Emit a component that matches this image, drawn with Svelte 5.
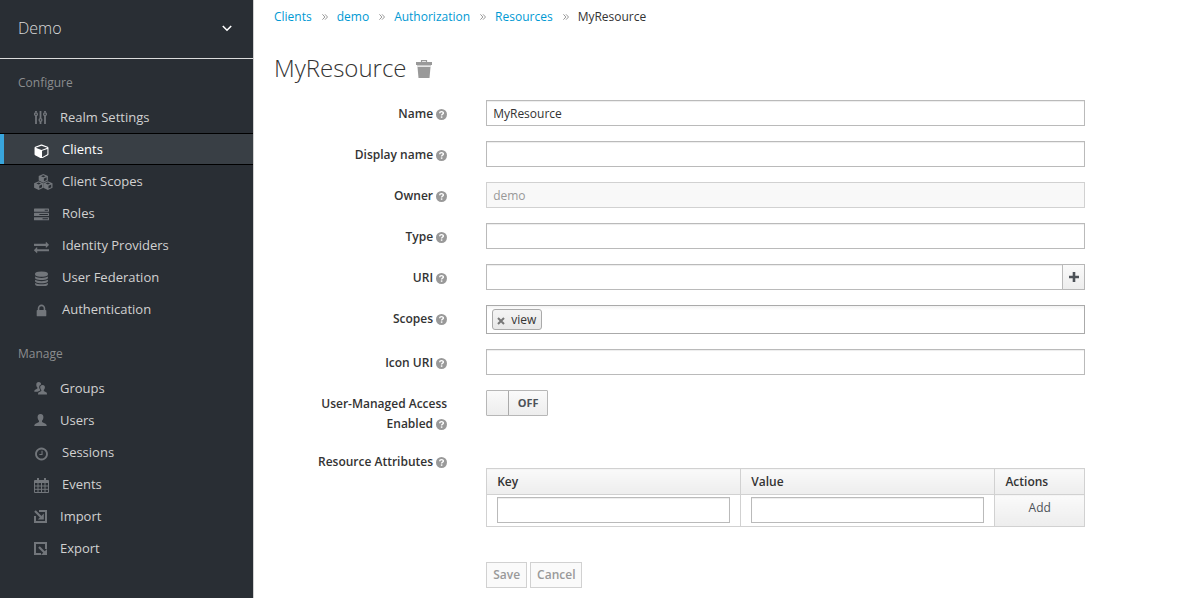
<script>
  const configure = [
    { name: 'Realm Settings', icon: 'sliders' },
    { name: 'Clients', icon: 'cube', active: true },
    { name: 'Client Scopes', icon: 'cubes' },
    { name: 'Roles', icon: 'tasks' },
    { name: 'Identity Providers', icon: 'exchange' },
    { name: 'User Federation', icon: 'database' },
    { name: 'Authentication', icon: 'lock' },
  ];
  const manage = [
    { name: 'Groups', icon: 'users' },
    { name: 'Users', icon: 'user' },
    { name: 'Sessions', icon: 'clock' },
    { name: 'Events', icon: 'calendar' },
    { name: 'Import', icon: 'import' },
    { name: 'Export', icon: 'export' },
  ];
  const menus = [
    { title: 'Configure', items: configure },
    { title: 'Manage', items: manage },
  ];
  const crumbs = ['Clients', 'demo', 'Authorization', 'Resources'];

  const glyphs = {
    cube: 'M896 1629l640-349v-636l-640 233v752zm-64-865l698-254-698-254-698 254zm832-252v768q0 35-18 65t-49 47l-704 384q-28 16-61 16t-61-16l-704-384q-31-17-49-47t-18-65v-768q0-40 23-73t61-50l704-256q22-8 44-8t44 8l704 256q38 17 61 50t23 73z',
    tasks: 'M1024 1408h640v-128h-640v128zm-384-512h1024v-128h-1024v128zm640-512h384v-128h-384v128zm512 832v256q0 26-19 45t-45 19h-1664q-26 0-45-19t-19-45v-256q0-26 19-45t45-19h1664q26 0 45 19t19 45zm0-512v256q0 26-19 45t-45 19h-1664q-26 0-45-19t-19-45v-256q0-26 19-45t45-19h1664q26 0 45 19t19 45zm0-512v256q0 26-19 45t-45 19h-1664q-26 0-45-19t-19-45v-256q0-26 19-45t45-19h1664q26 0 45 19t19 45z',
    exchange: 'M1792 1184v192q0 13-9.5 22.5t-22.5 9.5h-1376v192q0 13-9.5 22.5t-22.5 9.5q-12 0-24-10l-319-320q-9-9-9-22 0-14 9-23l320-320q9-9 23-9 13 0 22.5 9.5t9.5 22.5v192h1376q13 0 22.5 9.5t9.5 22.5zm0-544q0 14-9 23l-320 320q-9 9-23 9-13 0-22.5-9.5t-9.5-22.5v-192h-1376q-13 0-22.5-9.5t-9.5-22.5v-192q0-13 9.5-22.5t22.5-9.5h1376v-192q0-14 9-23t23-9q12 0 24 10l319 319q9 9 9 23z',
    database: 'M896 768q237 0 443-43t325-127v170q0 69-103 128t-280 93.5-385 34.5-385-34.5-280-93.5-103-128v-170q119 84 325 127t443 43zm0 768q237 0 443-43t325-127v170q0 69-103 128t-280 93.5-385 34.5-385-34.5-280-93.5-103-128v-170q119 84 325 127t443 43zm0-384q237 0 443-43t325-127v170q0 69-103 128t-280 93.5-385 34.5-385-34.5-280-93.5-103-128v-170q119 84 325 127t443 43zm0-1152q208 0 385 34.5t280 93.5 103 128v128q0 69-103 128t-280 93.5-385 34.5-385-34.5-280-93.5-103-128v-128q0-69 103-128t280-93.5 385-34.5z',
    lock: 'M640 768h512v-192q0-106-75-181t-181-75-181 75-75 181v192zm832 96v576q0 40-28 68t-68 28h-960q-40 0-68-28t-28-68v-576q0-40 28-68t68-28h32v-192q0-184 132-316t316-132 316 132 132 316v192h32q40 0 68 28t28 68z',
    clock: 'M1024 544v448q0 14-9 23t-23 9h-320q-14 0-23-9t-9-23v-64q0-14 9-23t23-9h224v-352q0-14 9-23t23-9h64q14 0 23 9t9 23zm416 352q0-148-73-273t-198-198-273-73-273 73-198 198-73 273 73 273 198 198 273 73 273-73 198-198 73-273zm224 0q0 209-103 385.5t-279.5 279.5-385.5 103-385.5-103-279.5-279.5-103-385.5 103-385.5 279.5-279.5 385.5-103 385.5 103 279.5 279.5 103 385.5z',
  };

  let name = $state('MyResource');
  let managed = $state(false);
</script>

{#snippet icon(id)}
  {#if glyphs[id]}
    <svg class="icon wide" viewBox={id === 'cube' ? '-64 -180 1792 1912' : '0 -180 1792 1912'} fill="currentColor" aria-hidden="true"><path d={glyphs[id]} /></svg>
  {:else if id === 'sliders'}
    <svg class="icon" viewBox="0 0 13 13" fill="none" stroke="currentColor" aria-hidden="true">
      <path stroke-width="1.8" d="M2 0v1.600M2 4.500V13M6.500 0v7.500M6.500 10.400V13M11 0v1.600M11 4.500V13" />
      <g stroke-width="1.300"><circle cx="2" cy="3.200" r="1.400" /><circle cx="6.500" cy="9" r="1.400" /><circle cx="11" cy="3.200" r="1.400" /></g>
    </svg>
  {:else if id === 'cubes'}
    <svg class="icon cubes" viewBox="0 0 19 16" fill="currentColor" aria-hidden="true">
      {#each [[4.7, 0], [0.1, 7.3], [9.3, 7.3]] as [x, y]}
        <g transform="translate({x} {y})">
          <path fill-rule="evenodd" d="M4.6 0 9.200 1.900v4.500L4.600 8.700 0 6.400V1.900zM4.600 1.200 2.300 2.200l2.300 1 2.300-1zM5.200 4.400v2.800l2.700-1.300V3.200z" />
        </g>
      {/each}
    </svg>
  {:else if id === 'calendar'}
    <svg class="icon wide" viewBox="0 0 15 16" fill="none" stroke="currentColor" aria-hidden="true">
      <path fill="currentColor" stroke="none" d="M1 3h13a1 1 0 0 1 1 1v2H0V4a1 1 0 0 1 1-1z" />
      <path stroke-width="2" d="M4 1v3M11 1v3" />
      <path d="M.5 5v10.500h14V5M4 6v9.500M7.500 6v9.500M11 6v9.500M.5 9h14M.5 12.300h14" />
    </svg>
  {:else if id === 'user'}
    <svg class="icon" viewBox="0 0 13 13" fill="currentColor" aria-hidden="true">
      <path d="M6.500 0C8.700 0 9.500 1.500 9.400 3.400 9.300 5 8.600 6 8 6.700V8.100L11.500 9.700c.9.500 1.200 1.200 1.200 2.400H.3C.3 10.900.6 10.200 1.500 9.700L5 8.100V6.700C4.400 6 3.700 5 3.600 3.400 3.500 1.500 4.300 0 6.500 0z" />
    </svg>
  {:else if id === 'users'}
    <svg class="icon" viewBox="0 0 13 13" fill="currentColor" aria-hidden="true">
      <path d="M4.700 .1c1.700 0 2.500 1 2.400 2.300C5.600 3 5 4.200 5.200 5.600c.1.900.6 1.600 1 2.100v.7L3.500 9.700H.3c0-1.200.2-1.600.9-2L3.400 6.600V5.500C2.800 5 2.300 4 2.300 2.700 2.300 1.100 3.100.1 4.700.1z" />
      <path d="M8.500 2.900c1.800 0 2.500 1.200 2.400 2.600-.1 1.200-.6 2-1.100 2.500V9l2.300 1.200c.8.400.9 1 .9 2.200H4c0-1.200.2-1.800.9-2.200L7.300 9V8c-.5-.5-1-1.300-1.100-2.500-.1-1.400.6-2.600 2.300-2.600z" />
    </svg>
  {:else if id === 'import'}
    <svg class="icon" viewBox="0 1 13 13" fill="none" stroke="currentColor" aria-hidden="true">
      <path stroke-width="2" d="M5 2h7v11H1V7" /><path stroke-width="2.200" d="M1 2 7 8" />
      <path fill="currentColor" stroke="none" d="M9.800 4.500v6H3.800z" />
    </svg>
  {:else}
    <svg class="icon" viewBox="0 1 13 13" fill="none" stroke="currentColor" aria-hidden="true">
      <path stroke-width="2" d="M12 8V2H1v11H7" /><path stroke-width="2.200" d="M5 6l6 6" />
      <path fill="currentColor" stroke="none" d="M13 8v6H7z" />
    </svg>
  {/if}
{/snippet}

{#snippet help()}
  <svg class="help" viewBox="0 0 10 10" aria-hidden="true">
    <circle cx="5" cy="5" r="5" fill="#999" />
    <path d="M3.300 3.900C3.400 2.800 4.100 2.400 5 2.400c1 0 1.700.5 1.700 1.300 0 1.100-1.600 1.100-1.600 2.200" fill="none" stroke="#fff" stroke-width="1.300" />
    <rect x="4.400" y="6.700" width="1.400" height="1.300" fill="#fff" />
  </svg>
{/snippet}

<div class="page">
  <aside>
    <button class="realm" type="button">
      Demo
      <svg width="10" height="7" viewBox="0 0 10 7" fill="none" stroke="#fff" stroke-width="1.600" aria-hidden="true"><path d="M.8 1 5 5.200 9.200 1" /></svg>
    </button>
    {#each menus as menu}
      <nav aria-label={menu.title}>
        <h2>{menu.title}</h2>
        <ul>
          {#each menu.items as item}
            <li><a href="#top" class:active={item.active}>{@render icon(item.icon)}{item.name}</a></li>
          {/each}
        </ul>
      </nav>
    {/each}
  </aside>

  <main>
    <ol class="crumbs">
      {#each crumbs as crumb}
        <li>
          <a href="#top">{crumb}</a>
          <svg width="6" height="6" viewBox="0 0 6 6" fill="none" stroke="#999" aria-hidden="true"><path d="M.4 .3 2.900 3 .4 5.700M3 .3 5.500 3 3 5.700" /></svg>
        </li>
      {/each}
      <li>MyResource</li>
    </ol>

    <h1>
      MyResource
      <button class="trash" type="button" aria-label="Delete">
        <svg width="16" height="18" viewBox="0 0 16 18" aria-hidden="true">
          <path d="M5.500 2.500V.7h5v1.800" fill="none" stroke="#999" stroke-width="1.200" />
          <path d="M0 2h16v3H0z" fill="#999" />
          <path d="M1 5h14v1.500H1z" fill="#ccc" />
          <path d="M1.500 7h13l-1 11h-11z" fill="#999" />
        </svg>
      </button>
    </h1>

    <form onsubmit={(e) => e.preventDefault()}>
      <div class="row">
        <label for="name">Name {@render help()}</label>
        <input id="name" type="text" bind:value={name} />
      </div>
      <div class="row">
        <label for="display">Display name {@render help()}</label>
        <input id="display" type="text" />
      </div>
      <div class="row">
        <label for="owner">Owner {@render help()}</label>
        <input id="owner" type="text" value="demo" disabled />
      </div>
      <div class="row">
        <label for="type">Type {@render help()}</label>
        <input id="type" type="text" />
      </div>
      <div class="row">
        <label for="uri">URI {@render help()}</label>
        <div class="group">
          <input id="uri" type="text" />
          <button class="plus" type="button" aria-label="Add URI">
            <svg width="10" height="10" viewBox="0 0 10 10" fill="none" stroke="#4d5258" stroke-width="2.600" aria-hidden="true"><path d="M5 0v10M0 5h10" /></svg>
          </button>
        </div>
      </div>
      <div class="row">
        <label for="scopes">Scopes {@render help()}</label>
        <div class="tags">
          <span class="tag">
            <button type="button" aria-label="Remove view">
              <svg width="8" height="8" viewBox="0 0 8 8" fill="none" stroke="#777" stroke-width="2" aria-hidden="true"><path d="M1 1l6 6M7 1 1 7" /></svg>
            </button>
            view
          </span>
          <input id="scopes" type="text" />
        </div>
      </div>
      <div class="row">
        <label for="icon-uri">Icon URI {@render help()}</label>
        <input id="icon-uri" type="text" />
      </div>
      <div class="row">
        <label for="managed">User-Managed Access Enabled {@render help()}</label>
        <label class="switch">
          <input id="managed" type="checkbox" bind:checked={managed} />
          <span>{managed ? 'ON' : 'OFF'}</span>
        </label>
      </div>
      <div class="row">
        <div class="label" id="attributes">Resource Attributes {@render help()}</div>
        <table aria-labelledby="attributes">
          <thead>
            <tr><th>Key</th><th>Value</th><th class="actions">Actions</th></tr>
          </thead>
          <tbody>
            <tr>
              <td><input type="text" aria-label="Key" /></td>
              <td><input type="text" aria-label="Value" /></td>
              <td class="add"><button type="button">Add</button></td>
            </tr>
          </tbody>
        </table>
      </div>
      <div class="row buttons">
        <div>
          <button type="submit" disabled>Save</button>
          <button type="button" disabled>Cancel</button>
        </div>
      </div>
    </form>
  </main>
</div>

<style>
  :global(body) {
    margin: 0;
    background: #fff;
  }
  .page {
    display: flex;
    min-height: 100vh;
    font: 12px/20px "Open Sans", sans-serif;
    color: #333;
  }
  .page :global(*) {
    box-sizing: border-box;
  }
  button,
  input {
    font: inherit;
    color: inherit;
  }
  button {
    cursor: pointer;
  }
  svg {
    display: block;
    flex: none;
  }
  a {
    color: #0099d3;
    text-decoration: none;
  }
  ul,
  ol {
    list-style: none;
    margin: 0;
    padding: 0;
  }

  aside {
    flex: none;
    width: 254px;
    background: #292e34;
    border-right: 1px solid #d1d1d1;
  }
  .realm {
    display: flex;
    align-items: center;
    justify-content: space-between;
    width: 100%;
    height: 59px;
    padding: 0 21px 2px 18px;
    border: 0;
    border-bottom: 1px solid #dbdbdb;
    background: none;
    font-size: 16px;
    font-weight: 300;
    color: #dbdbdb;
  }
  nav {
    padding-top: 14px;
  }
  nav + nav {
    padding-top: 19px;
  }
  h2 {
    margin: 0 0 8px;
    padding-left: 18px;
    font-size: 12px;
    font-weight: 400;
    line-height: 20px;
    color: #8b8d8f;
  }
  nav a {
    display: flex;
    align-items: center;
    height: 32px;
    padding-left: 34px;
    font-size: 13px;
    color: #d1d1d1;
  }
  nav a.active {
    border: solid #000;
    border-width: 1px 0;
    background: #393f45;
    color: #fff;
    box-shadow: inset 4px 0 #39a5dc;
  }
  .icon {
    width: 13px;
    height: 13px;
    margin-right: 13px;
    color: #72767b;
  }
  .wide {
    width: 15px;
    height: 16px;
    margin-top: 2px;
  }
  .cubes {
    width: 19px;
    height: 16px;
    margin-top: 2px;
    margin-right: 9px;
  }
  .active .icon {
    color: #fff;
  }

  main {
    flex: 1;
    min-width: 0;
    padding: 7px 20px 10px;
  }
  .crumbs {
    display: flex;
    gap: 9px;
  }
  .crumbs li {
    display: flex;
    align-items: center;
    gap: 10px;
  }
  h1 {
    display: flex;
    align-items: center;
    gap: 9px;
    margin: 28px 0 19px;
    font-size: 24px;
    font-weight: 300;
    line-height: 26px;
  }
  .trash {
    padding: 2px 0 0;
    border: 0;
    background: none;
  }
  form {
    display: flex;
    flex-direction: column;
    gap: 15px;
  }
  .row {
    display: grid;
    grid-template-columns: 19.2% 66.4%;
    column-gap: 39px;
    align-items: start;
  }
  .row > label:first-child,
  .label {
    margin-bottom: -1px;
    padding-top: 4px;
    font-weight: 600;
    text-align: right;
  }
  .help {
    display: inline-block;
    width: 11px;
    height: 11px;
    vertical-align: -2px;
  }
  input[type='text'] {
    width: 100%;
    height: 26px;
    padding: 0 6px;
    border: 1px solid #bababa;
    border-radius: 0;
    background: #fff;
    box-shadow: inset 0 1px 1px rgba(3, 3, 3, 0.075);
    outline: 0;
  }
  input[type='text']:disabled {
    border-color: #d1d1d1;
    background: #f8f8f8;
    color: #999;
    box-shadow: none;
  }
  .group {
    display: flex;
  }
  .plus {
    display: grid;
    place-items: center;
    flex: none;
    width: 22px;
    padding: 0;
    border: 1px solid #b7b7b7;
    border-left: 0;
    background: linear-gradient(#fafafa, #ededed);
  }
  .tags {
    display: flex;
    align-items: center;
    height: 29px;
    padding: 0 5px;
    border: 1px solid #aaa;
    background: linear-gradient(#f3f3f3, #fff 4px);
  }
  .tags input[type='text'] {
    flex: 1;
    height: 20px;
    border: 0;
    background: none;
    box-shadow: none;
  }
  .tag {
    display: flex;
    align-items: center;
    gap: 6px;
    height: 21px;
    padding: 0 5px 0 4px;
    border: 1px solid #aaa;
    border-radius: 3px;
    background: linear-gradient(#f4f4f4, #e8e8e8);
  }
  .tag button {
    padding: 2px 0 0;
    border: 0;
    background: none;
  }
  .switch {
    display: flex;
    justify-self: start;
    width: 62px;
    height: 26px;
    border: 1px solid #b7b7b7;
    border-radius: 1px;
    background: linear-gradient(#fafafa, #ededed);
    font-size: 11px;
    font-weight: 700;
    line-height: 24px;
    color: #4d5258;
  }
  .switch input {
    appearance: none;
    width: 22px;
    height: 24px;
    margin: 0;
    border-right: 1px solid #aaa;
    background: linear-gradient(#fafafa, #ededed);
  }
  .switch input:checked {
    order: 1;
    border-right: 0;
    border-left: 1px solid #aaa;
  }
  .switch span {
    flex: 1;
    text-align: center;
  }
  table {
    width: 100%;
    margin-top: 20px;
    border-collapse: collapse;
    table-layout: fixed;
  }
  th,
  td {
    padding: 2px 10px 3px;
    border: 1px solid #d1d1d1;
  }
  th {
    padding: 3px 10px 2px;
    font-weight: 600;
    text-align: left;
    background: linear-gradient(#fafafa, #ededed);
  }
  .actions {
    width: 15%;
  }
  td input {
    display: block;
  }
  .add {
    padding: 3px 0 2px;
    vertical-align: top;
    background: linear-gradient(#fafafa, #ededed);
  }
  .add button {
    display: block;
    width: 100%;
    padding: 0;
    border: 0;
    background: none;
    color: #4d5258;
  }
  .buttons {
    margin-top: 20px;
  }
  .buttons div {
    grid-column: 2;
    display: flex;
    gap: 3px;
  }
  .buttons button {
    height: 26px;
    padding: 2px 6px;
    border: 1px solid #d1d1d1;
    background: #fafafa;
    font-weight: 600;
    line-height: 20px;
    color: #999;
  }
</style>
